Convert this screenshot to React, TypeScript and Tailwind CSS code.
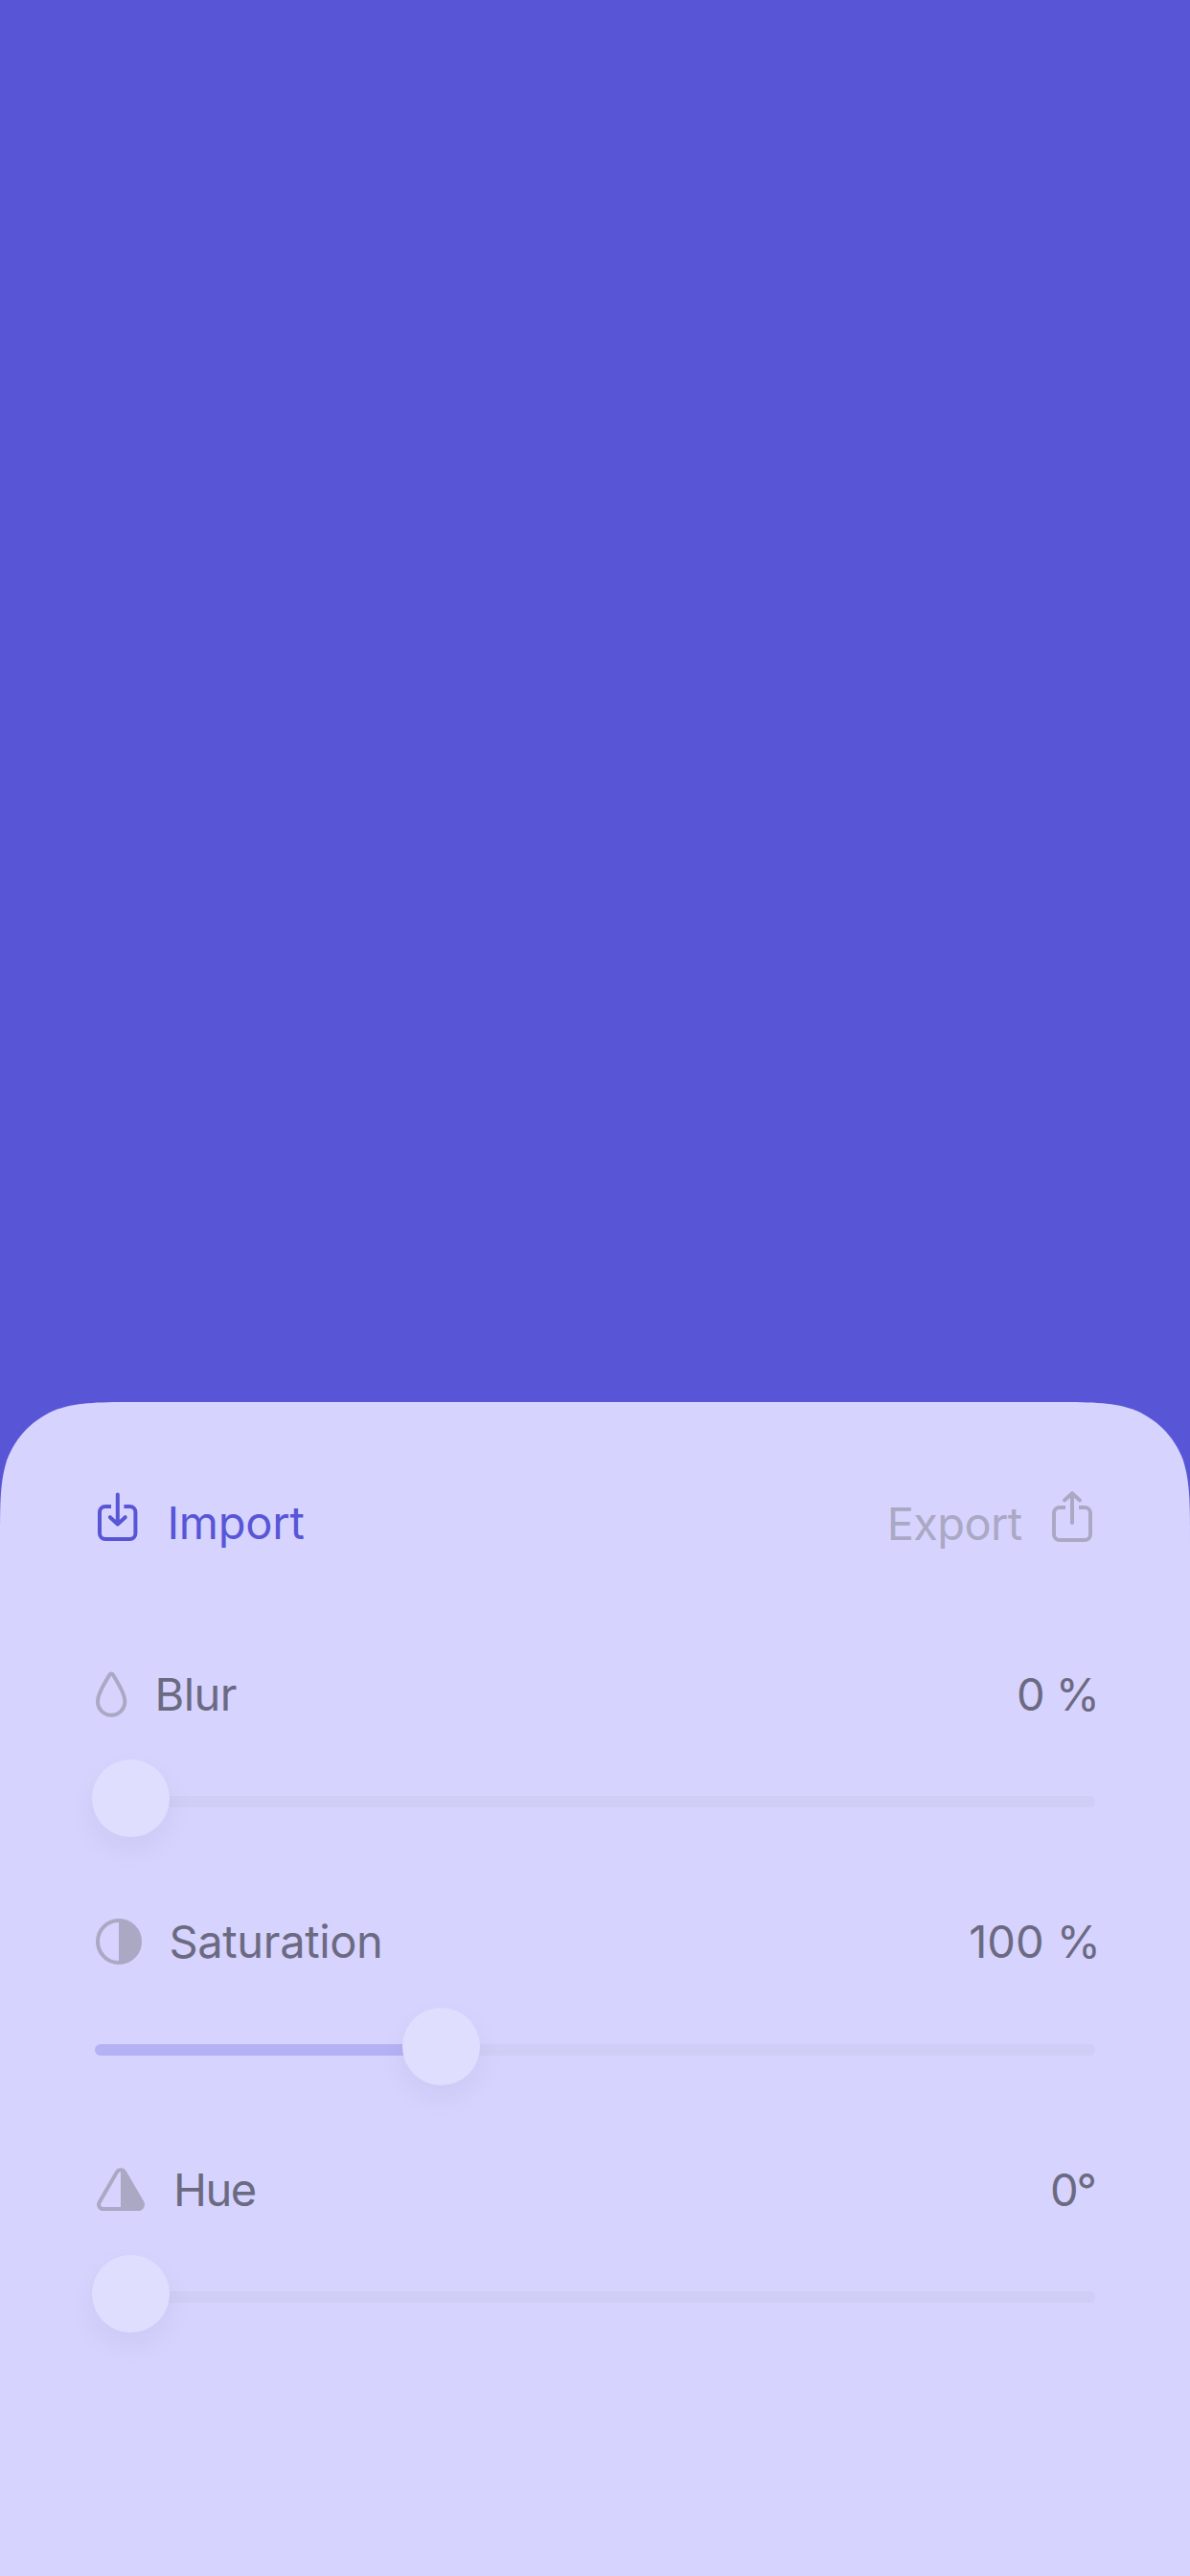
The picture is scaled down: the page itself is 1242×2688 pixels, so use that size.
import type { ReactNode } from "react";

function ImportIcon() {
  return (
    <svg className="h-[60px] w-[47px] overflow-visible" viewBox="0 0 47 60" fill="none" stroke="currentColor" strokeWidth="4">
      <path d="M17 13H11a6 6 0 0 0-6 6v22a6 6 0 0 0 6 6h25.4a6 6 0 0 0 6-6V19a6 6 0 0 0-6-6h-6" />
      <path d="M23.8 0.6V31M15.9 24.2l7.9 7.2 7.9-7.2" strokeLinecap="round" strokeLinejoin="round" />
    </svg>
  );
}

function ExportIcon() {
  return (
    <svg className="h-[60px] w-[48px] overflow-visible" viewBox="0 0 48 60" fill="none" stroke="currentColor" strokeWidth="4">
      <path d="M17 14h-6a6 6 0 0 0-6 6v22a6 6 0 0 0 6 6h26a6 6 0 0 0 6-6V20a6 6 0 0 0-6-6h-6" />
      <path d="M24 30.1V-0.4M16 6.4L24-0.8l8 7.2" strokeLinecap="round" strokeLinejoin="round" />
    </svg>
  );
}

function DropIcon() {
  return (
    <svg className="h-[60px] w-[35px] overflow-visible" viewBox="0 0 35 60" fill="none" stroke="currentColor" strokeWidth="4">
      <path d="M15.5 9.4C16.2 8.1 18.2 8.1 18.9 9.4C25.5 20.5 31.3 30 31.3 37.6A14.1 14.1 0 0 1 3 37.6C3 30 8.9 20.5 15.5 9.4Z" />
    </svg>
  );
}

function ContrastIcon() {
  return (
    <svg className="h-[60px] w-[50px]" viewBox="0 0 50 60">
      <circle cx="25" cy="30" r="22" fill="none" stroke="currentColor" strokeWidth="4" />
      <path d="M25 8a22 22 0 0 1 0 44Z" fill="currentColor" />
    </svg>
  );
}

function PrismIcon() {
  return (
    <svg className="h-[60px] w-[54px]" viewBox="0 0 54 60">
      <path d="M23 11.5a4.6 4.6 0 0 1 8 0L49.3 43a4.7 4.7 0 0 1-4 7H8.7a4.7 4.7 0 0 1-4-7Z" fill="none" stroke="currentColor" strokeWidth="4" />
      <path d="M27 9.2a4.6 4.6 0 0 1 4 2.3L49.3 43a4.7 4.7 0 0 1-4 7H27Z" fill="currentColor" />
    </svg>
  );
}

type ControlProps = {
  icon: ReactNode;
  label: string;
  labelClass: string;
  value: string;
  valueClass: string;
  offset: number;
  filled?: boolean;
};

function Control({ icon, label, labelClass, value, valueClass, offset, filled }: ControlProps) {
  return (
    <section>
      <div className="flex h-[60px] justify-between leading-[60px] text-[#6c6a81]">
        <div className="flex gap-[27px]">
          <span className="text-[#aba8c4]">{icon}</span>
          <span className={labelClass}>{label}</span>
        </div>
        <span className={valueClass}>{value}</span>
      </div>
      <div className={filled ? "mt-[39px] grid h-[81px]" : "mt-[38px] grid h-[81px]"}>
        <div className="col-start-1 row-start-1 mt-[38px] h-3 overflow-hidden rounded-full bg-[#d0cdf6]">
          {filled && <div className="h-full bg-[#b4b2f5]" style={{ width: offset + 40 }} />}
        </div>
        <div
          className="z-10 col-start-1 row-start-1 size-[81px] rounded-full bg-[#dfdeff] shadow-[0_12px_30px_rgba(20,15,30,0.05)]"
          style={{ marginLeft: offset }}
        />
      </div>
    </section>
  );
}

export default function App() {
  return (
    <main className="flex h-[2688px] w-[1242px] flex-col justify-end bg-[#5856d6] font-['Inter',sans-serif] text-[47px] whitespace-nowrap">
      <div className="h-[1225px] bg-[#d6d3ff] px-[99px] pt-24 [clip-path:path('M0_146.75C0_104.5_0_83.37_7.19_60.62C16.23_35.79_35.79_16.23_60.62_7.19C83.37_0_104.5_0_146.75_0H1095.25C1137.5_0_1158.63_0_1181.38_7.19C1206.21_16.23_1225.77_35.79_1234.81_60.62C1242_83.37_1242_104.5_1242_146.75V1225H0Z')]">
        <header className="flex h-[60px] justify-between leading-[60px]">
          <button className="flex gap-[28.5px] text-[#5856d6]">
            <ImportIcon />
            <span className="tracking-[-0.25px]">Import</span>
          </button>
          <button className="flex gap-[28.5px] text-[#aba8c4]">
            <span className="mt-px tracking-[-0.65px]">Export</span>
            <ExportIcon />
          </button>
        </header>
        <div className="mt-[119px] flex flex-col gap-[79px]">
          <Control icon={<DropIcon />} label="Blur" labelClass="ml-[0.5px] tracking-[-0.6px]" value="0 %" valueClass="-mr-1 tracking-[-1px]" offset={-3} />
          <Control icon={<ContrastIcon />} label="Saturation" labelClass="ml-[0.5px] tracking-[-0.35px]" value="100 %" valueClass="-mr-[6px]" offset={321} filled />
          <Control icon={<PrismIcon />} label="Hue" labelClass="ml-px tracking-[-1.5px]" value="0°" valueClass="tracking-[-2px]" offset={-3} />
        </div>
      </div>
    </main>
  );
}
